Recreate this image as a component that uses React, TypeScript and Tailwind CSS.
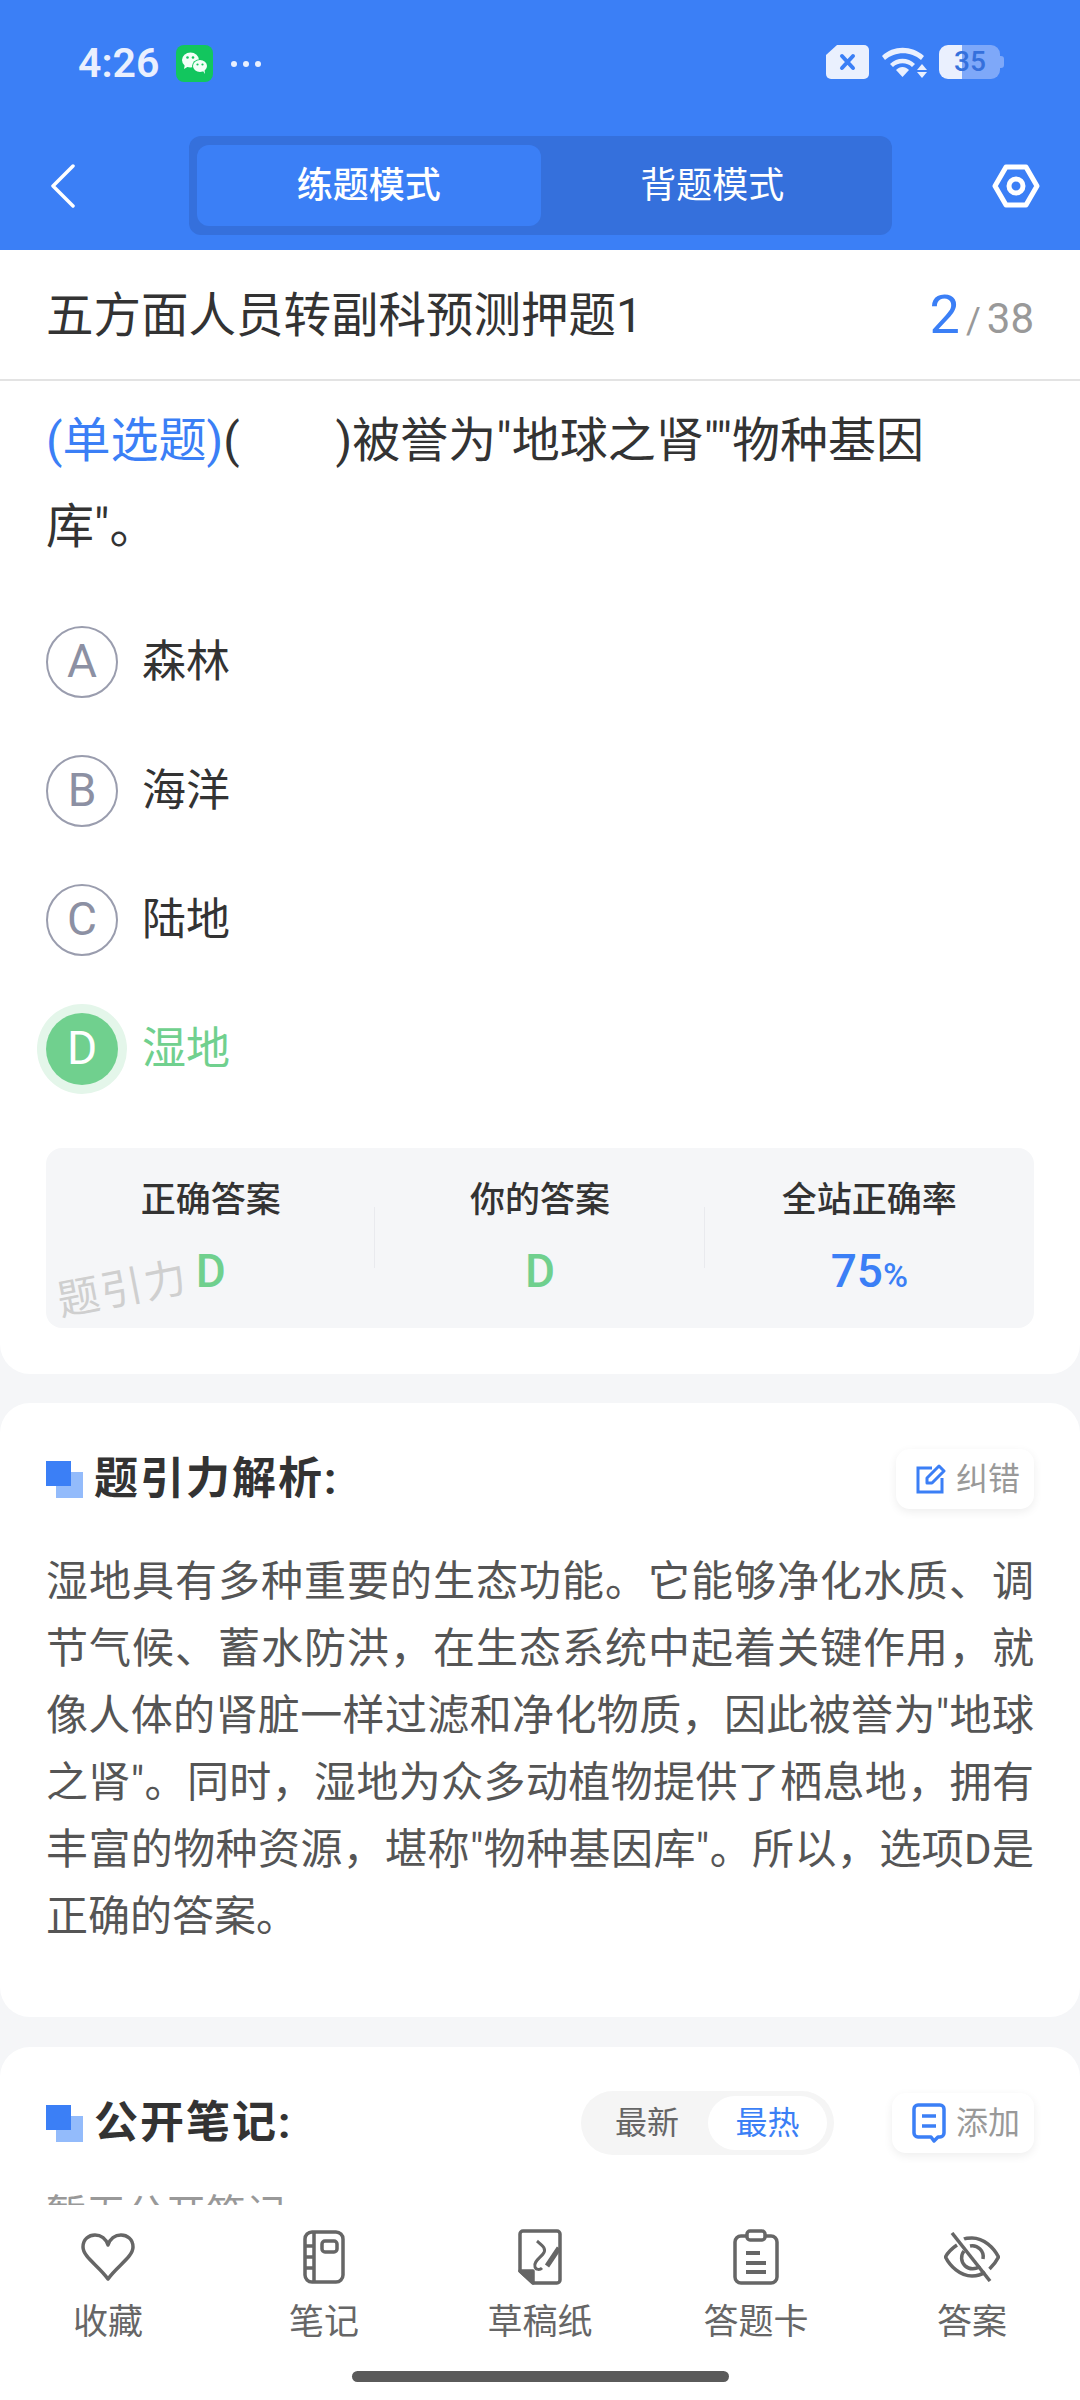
import type { ReactNode } from 'react'

const cjk = { fontFamily: 'Roboto, "Noto Sans CJK SC", sans-serif' }

function Option({ letter, text, active }: { letter: string; text: string; active?: boolean }) {
  return (
    <div className="flex h-[129px] items-center">
      <div
        className={
          active
            ? 'flex h-[72px] w-[72px] items-center justify-center rounded-full bg-[#70d08e] text-[46px] text-white shadow-[0_0_0_9px_#e4f6ea]'
            : 'flex h-[72px] w-[72px] items-center justify-center rounded-full border-2 border-[#9a9dae] text-[46px] text-[#8c90a3]'
        }
      >
        {letter}
      </div>
      <span className={active ? 'ml-[24px] text-[44px] text-[#70d08e]' : 'ml-[24px] text-[44px] text-[#333]'}>{text}</span>
    </div>
  )
}

function Stat({ label, children, divider }: { label: string; children: ReactNode; divider?: boolean }) {
  return (
    <div className="relative flex flex-1 flex-col items-center pt-[30px]">
      <div className="text-[35px] leading-[46px] font-medium text-[#333]">{label}</div>
      <div className="mt-[18px] leading-[58px]">{children}</div>
      {divider && <div className="absolute top-[59px] right-0 h-[61px] w-px bg-[#e9eaee]" />}
    </div>
  )
}

function Squares() {
  return (
    <div className="relative h-[37px] w-[37px] shrink-0">
      <div className="absolute right-0 bottom-0 h-[26px] w-[27px] bg-[#93bbfb]" />
      <div className="absolute top-0 left-0 h-[25px] w-[25px] bg-[#3b7ff6]" />
    </div>
  )
}

function SmallButton({ icon, text }: { icon: ReactNode; text: string }) {
  return (
    <div className="flex h-[60px] items-center gap-[10px] rounded-[14px] bg-white pr-[14px] pl-[20px] text-[32px] text-[#999] shadow-[0_3px_10px_rgba(0,0,0,0.07)]">
      {icon}
      <span>{text}</span>
    </div>
  )
}

function NavItem({ icon, label }: { icon: ReactNode; label: string }) {
  return (
    <div className="flex flex-1 flex-col items-center">
      <div className="flex h-[60px] items-center justify-center">{icon}</div>
      <div className="mt-[13px] text-[35px] leading-[46px] text-[#666]">{label}</div>
    </div>
  )
}

function WeChat() {
  return (
    <svg width="37" height="37" viewBox="0 0 37 37">
      <rect width="37" height="37" rx="8" fill="#12c65e" />
      <ellipse cx="14.500" cy="15" rx="8.500" ry="7.500" fill="#f4fff8" />
      <path d="M9 19l-1 5 5-3z" fill="#f4fff8" />
      <ellipse cx="24" cy="21" rx="8" ry="6.800" fill="#12c65e" />
      <ellipse cx="24" cy="21" rx="7" ry="6" fill="#f4fff8" />
      <path d="M27 26l2 3-.5-4z" fill="#f4fff8" />
      <circle cx="11.500" cy="12.500" r="1.300" fill="#12c65e" />
      <circle cx="17" cy="12.500" r="1.300" fill="#12c65e" />
      <circle cx="21.500" cy="19.500" r="1.100" fill="#12c65e" />
      <circle cx="26.500" cy="19.500" r="1.100" fill="#12c65e" />
    </svg>
  )
}

function StatusIcons() {
  return (
    <div className="flex items-center">
      <svg width="43" height="34" viewBox="0 0 43 34">
        <path d="M11 0h27a5 5 0 0 1 5 5v24a5 5 0 0 1-5 5H5a5 5 0 0 1-5-5V10z" fill="#eaf0fe" />
        <path d="M16 11l11 12M27 11L16 23" stroke="#3b7ff6" strokeWidth="4" strokeLinecap="round" />
      </svg>
      <svg className="ml-[12px]" width="46" height="34" viewBox="0 0 46 34">
        <path d="M1 11C12 0 31 0 43 11l-3 4C30 6 14 6 4 15z" fill="#eaf0fe" />
        <path d="M9 19c7-7 18-7 25 0l-3 3c-5-5-14-5-19 0z" fill="#eaf0fe" />
        <path d="M15 25c4-4 9-4 13 0l-6.500 7z" fill="#eaf0fe" />
        <path d="M41 19l5 6H36z" fill="#eaf0fe" />
        <path d="M36 27h10l-5 6z" fill="#eaf0fe" />
      </svg>
      <div className="relative ml-[12px] flex h-[34px] w-[65px] items-center">
        <div className="flex h-[34px] w-[61px] overflow-hidden rounded-[9px]">
          <div className="w-[23px] bg-[#eaf0fe]" />
          <div className="flex-1 bg-[#7ea8f9]" />
        </div>
        <div className="h-[12px] w-[4px] rounded-r-[3px] bg-[#7ea8f9]" />
        <span className="absolute left-[15px] text-[28px] leading-[34px] font-medium text-[#3570dc]">35</span>
      </div>
    </div>
  )
}

const navIcons = {
  heart: (
    <svg width="54" height="48" viewBox="0 0 54 48" fill="none" stroke="#666" strokeWidth="3.500" strokeLinejoin="round">
      <path d="M27 46C18 33 2 24 2 14 2 6 8 2 14 2c6 0 11 4 13 10C29 6 34 2 40 2c6 0 12 4 12 12 0 10-16 19-25 32z" />
    </svg>
  ),
  note: (
    <svg width="42" height="54" viewBox="0 0 42 54" fill="none" stroke="#666" strokeWidth="3.500">
      <rect x="2" y="2" width="38" height="50" rx="7" />
      <path d="M11 2v50M2 16h9M2 27h9M2 38h9" />
      <rect x="19" y="11" width="15" height="11" rx="3" />
    </svg>
  ),
  draft: (
    <svg width="46" height="56" viewBox="0 0 46 56" fill="none" stroke="#666" strokeWidth="3.500" strokeLinejoin="round">
      <path d="M6 2h34a3 3 0 0 1 3 3v46a3 3 0 0 1-3 3H16L3 42V5a3 3 0 0 1 3-3z" />
      <path d="M3 42h13v12z" fill="#666" />
      <path d="M20 12c6 5 10 8 6 13-3 4-10 8-8 13 1 3 5 3 7 1" strokeWidth="3" />
      <path d="M42 19L30 37" strokeWidth="5" />
    </svg>
  ),
  card: (
    <svg width="46" height="56" viewBox="0 0 46 56" fill="none" stroke="#666" strokeWidth="3.500">
      <path d="M13 7H8a6 6 0 0 0-6 6v35a6 6 0 0 0 6 6h30a6 6 0 0 0 6-6V13a6 6 0 0 0-6-6h-5" />
      <rect x="14" y="2" width="18" height="9" rx="3" />
      <path d="M13 24h14M13 34h20M13 43h20" strokeWidth="4" />
    </svg>
  ),
  eye: (
    <svg width="56" height="50" viewBox="0 0 56 50" fill="none" stroke="#666" strokeWidth="3.500">
      <path d="M13 13C7 17 3 22 1.500 25 6 34 16 44 28 44c5 0 9-1 13-4" />
      <path d="M20 7c2-1 5-1 8-1 12 0 22 10 26.500 19-2 4-5 8-9 12" />
      <path d="M20 19a11 11 0 0 0 16 15" />
      <path d="M26 14a11 11 0 0 1 13 13" />
      <path d="M8 1l38 48" />
    </svg>
  ),
}

export default function App() {
  return (
    <div className="flex h-[2400px] w-[1080px] flex-col overflow-hidden bg-[#f5f6f8]" style={cjk}>
      {/* header */}
      <div className="h-[250px] shrink-0 bg-[#3b7ff6] px-[46px]">
        <div className="flex h-[136px] items-start justify-between pt-[45px] pr-[30px]">
          <div className="flex items-center">
            <span className="ml-[32px] text-[41px] leading-[37px] font-semibold text-[#eaf0fe]">4:26</span>
            <div className="ml-[17px]">
              <WeChat />
            </div>
            <div className="ml-[18px] flex gap-[6px]">
              <div className="h-[6px] w-[6px] rounded-full bg-[#eaf0fe]" />
              <div className="h-[6px] w-[6px] rounded-full bg-[#eaf0fe]" />
              <div className="h-[6px] w-[6px] rounded-full bg-[#eaf0fe]" />
            </div>
          </div>
          <StatusIcons />
        </div>
        <div className="flex items-center">
          <svg className="ml-[4px]" width="26" height="44" viewBox="0 0 26 44" fill="none" stroke="#fff" strokeWidth="3.500" strokeLinecap="round" strokeLinejoin="round">
            <path d="M23 2L3 22l20 20" />
          </svg>
          <div className="ml-[113px] flex h-[99px] w-[703px] items-center rounded-[12px] bg-[#3570dc] px-[8px]">
            <div className="flex h-[81px] flex-1 items-center justify-center rounded-[12px] bg-[#3b7ff6] text-[36px] font-medium text-white">练题模式</div>
            <div className="flex h-[81px] flex-1 items-center justify-center text-[36px] text-white">背题模式</div>
          </div>
          <svg className="mr-[-6px] ml-auto" width="48" height="44" viewBox="0 0 48 44" fill="none" stroke="#fff" strokeWidth="5" strokeLinejoin="round">
            <path d="M14 3h20l11 19-11 19H14L3 22z" />
            <circle cx="24" cy="22" r="7" />
          </svg>
        </div>
      </div>

      {/* scrolling content */}
      <div className="min-h-0 flex-1 overflow-hidden">
        <div className="rounded-b-[30px] bg-white pb-[46px]">
          <div className="flex h-[131px] items-center justify-between border-b-2 border-[#e3e3e3] px-[46px]">
            <span className="pt-[4px] text-[47.500px] text-[#333]">五方面人员转副科预测押题1</span>
            <span className="text-[#999]">
              <span className="text-[54px] text-[#3b7ff6]">2</span>
              <span className="ml-[6px] text-[36px]">/</span>
              <span className="ml-[6px] text-[42px]">38</span>
            </span>
          </div>
          <div className="px-[46px] pt-[17px]">
            <div className="w-[900px] text-[48px] leading-[86px] text-[#333]">
              <span className="text-[#3b7ff6]">(单选题)</span>(<span className="inline-block w-[96px]" />)被誉为"地球之肾""物种基因库"。
            </div>
            <div className="mt-[27px]">
              <Option letter="A" text="森林" />
              <Option letter="B" text="海洋" />
              <Option letter="C" text="陆地" />
              <Option letter="D" text="湿地" active />
            </div>
            <div className="relative mt-[35px] flex h-[180px] overflow-hidden rounded-[16px] bg-[#f5f6f8]">
              <Stat label="正确答案" divider>
                <span className="text-[46px] font-medium text-[#70d08e]">D</span>
              </Stat>
              <Stat label="你的答案" divider>
                <span className="text-[46px] font-medium text-[#70d08e]">D</span>
              </Stat>
              <Stat label="全站正确率">
                <span className="text-[46px] font-medium text-[#3b7ff6]">75</span>
                <span className="text-[34px] font-medium text-[#3b7ff6]">%</span>
              </Stat>
              <div className="absolute top-[129px] left-[12px] origin-left rotate-[-11deg] text-[42px] leading-[50px] tracking-[2px] whitespace-nowrap text-[#cfcfcf]">题引力</div>
            </div>
          </div>
        </div>

        <div className="mt-[29px] rounded-[30px] bg-white px-[46px] pt-[46px] pb-[67px]">
          <div className="flex h-[60px] items-center justify-between">
            <div className="flex items-center gap-[11px]">
              <Squares />
              <span className="text-[44px] font-bold tracking-[2px] text-[#333]">题引力解析:</span>
            </div>
            <SmallButton
              text="纠错"
              icon={
                <svg width="30" height="30" viewBox="0 0 30 30" fill="none" stroke="#3b7ff6" strokeWidth="3">
                  <path d="M16 4H2v24h24V14" />
                  <path d="M11 14L23 2l5 5-12 12h-5z" strokeLinejoin="round" />
                </svg>
              }
            />
          </div>
          <p className="mt-[39px] text-justify text-[42px] leading-[67px] text-[#555]">
            湿地具有多种重要的生态功能。它能够净化水质、调节气候、蓄水防洪，在生态系统中起着关键作用，就像人体的肾脏一样过滤和净化物质，因此被誉为"地球之肾"。同时，湿地为众多动植物提供了栖息地，拥有丰富的物种资源，堪称"物种基因库"。所以，选项D是正确的答案。
          </p>
        </div>

        <div className="mt-[30px] rounded-t-[30px] bg-white px-[46px] pt-[44px]">
          <div className="flex h-[64px] items-center">
            <Squares />
            <span className="ml-[11px] text-[44px] font-bold tracking-[2px] text-[#333]">公开笔记:</span>
            <div className="ml-auto flex h-[64px] w-[253px] items-center rounded-full bg-[#f5f5f5] pr-[7px] pl-[34px] text-[32px]">
              <span className="text-[#666]">最新</span>
              <div className="ml-auto flex h-[54px] w-[119px] items-center justify-center rounded-full bg-white text-[#3b7ff6]">最热</div>
            </div>
            <div className="ml-[58px]">
              <SmallButton
                text="添加"
                icon={
                  <svg width="34" height="40" viewBox="0 0 34 40" fill="none" stroke="#3b7ff6" strokeWidth="3.500">
                    <path d="M6 2h22a4 4 0 0 1 4 4v24a4 4 0 0 1-4 4h-2l-4 4-3-4H6a4 4 0 0 1-4-4V6a4 4 0 0 1 4-4z" strokeLinejoin="round" />
                    <path d="M10 13h14M10 23h14" />
                  </svg>
                }
              />
            </div>
          </div>
          <div className="mt-[30px] text-[40px] text-[#999]">暂无公开笔记</div>
        </div>
      </div>

      {/* bottom bar */}
      <div className="flex h-[195px] shrink-0 flex-col bg-white">
        <div className="flex pt-[22px]">
          <NavItem icon={navIcons.heart} label="收藏" />
          <NavItem icon={navIcons.note} label="笔记" />
          <NavItem icon={navIcons.draft} label="草稿纸" />
          <NavItem icon={navIcons.card} label="答题卡" />
          <NavItem icon={navIcons.eye} label="答案" />
        </div>
        <div className="mx-auto mt-[25px] h-[11px] w-[377px] rounded-full bg-[#5a5a5a]" />
      </div>
    </div>
  )
}
